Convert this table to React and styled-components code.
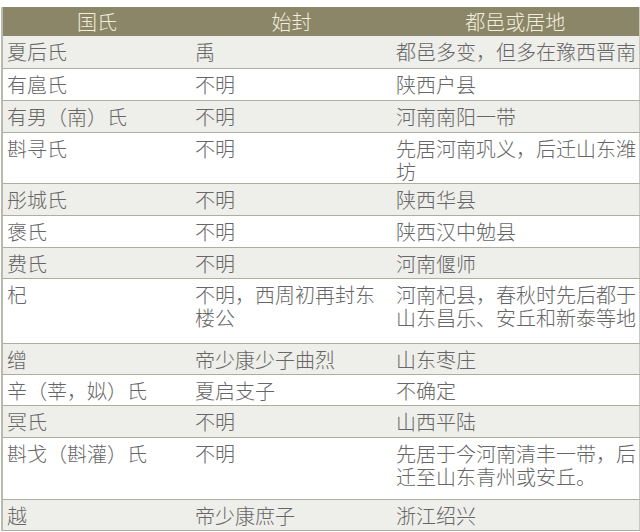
import React from "react";
import styled, { createGlobalStyle } from "styled-components";

const GlobalStyle = createGlobalStyle`
  html, body {
    margin: 0;
    padding: 0;
    background: #ffffff;
  }
  body {
    font-family: "Noto Sans CJK SC", "Noto Sans", sans-serif;
  }
`;

const Page = styled.div`
  width: 640px;
  height: 532px;
  padding: 7px 2px 0 1px;
  box-sizing: border-box;
  background: #ffffff;
`;

const Table = styled.table`
  width: 637px;
  border-collapse: collapse;
  table-layout: fixed;
  border-left: 2px solid #b9b9ad;
  border-right: 1px solid #c9c9bf;
  font-size: 20px;
  font-weight: 300;
  color: #666666;
`;

const HeadRow = styled.tr`
  background: #8c8669;
  height: 29px;
`;

const HeadCell = styled.th`
  padding: 0;
  font-weight: 300;
  line-height: 29px;
  color: #f2eedd;
  text-align: center;
  white-space: nowrap;
`;

const Row = styled.tr`
  background: ${p => (p.$shade ? "#eeeeea" : "#ffffff")};
  border-bottom: 1px solid #aeae9f;
`;

const Cell = styled.td`
  padding: 4px 0 0 4px;
  vertical-align: top;
  line-height: 23px;
  white-space: nowrap;
  overflow: visible;
`;

const rows = [
  { h: 32, a: "夏后氏", b: "禹", c: "都邑多变，但多在豫西晋南" },
  { h: 32, a: "有扈氏", b: "不明", c: "陕西户县" },
  { h: 32, a: "有男（南）氏", b: "不明", c: "河南南阳一带" },
  { h: 49, a: "斟寻氏", b: "不明", c: ["先居河南巩义，后迁山东潍", "坊"] },
  { h: 32, a: "彤城氏", b: "不明", c: "陕西华县" },
  { h: 32, a: "褒氏", b: "不明", c: "陕西汉中勉县" },
  { h: 31, a: "费氏", b: "不明", c: "河南偃师" },
  { h: 65, a: "杞", b: ["不明，西周初再封东", "楼公"], c: ["河南杞县，春秋时先后都于", "山东昌乐、安丘和新泰等地"] },
  { h: 31, a: "缯", b: "帝少康少子曲烈", c: "山东枣庄" },
  { h: 31, a: "辛（莘，姒）氏", b: "夏启支子", c: "不确定" },
  { h: 32, a: "冥氏", b: "不明", c: "山西平陆" },
  { h: 62, a: "斟戈（斟灌）氏", b: "不明", c: ["先居于今河南清丰一带，后", "迁至山东青州或安丘。"] },
  { h: 31, a: "越", b: "帝少康庶子", c: "浙江绍兴" },
];

const Lines = ({ text }) =>
  Array.isArray(text)
    ? text.map((t, i) => (
        <React.Fragment key={i}>
          {i > 0 && <br />}
          {t}
        </React.Fragment>
      ))
    : text;

export default function App() {
  return (
    <>
      <GlobalStyle />
      <Page>
        <Table>
          <colgroup>
            <col style={{ width: 189 }} />
            <col style={{ width: 201 }} />
            <col style={{ width: 247 }} />
          </colgroup>
          <thead>
            <HeadRow>
              <HeadCell>国氏</HeadCell>
              <HeadCell>始封</HeadCell>
              <HeadCell>都邑或居地</HeadCell>
            </HeadRow>
          </thead>
          <tbody>
            {rows.map((r, i) => (
              <Row key={i} $shade={i % 2 === 0} style={{ height: r.h }}>
                <Cell><Lines text={r.a} /></Cell>
                <Cell><Lines text={r.b} /></Cell>
                <Cell><Lines text={r.c} /></Cell>
              </Row>
            ))}
          </tbody>
        </Table>
      </Page>
    </>
  );
}
